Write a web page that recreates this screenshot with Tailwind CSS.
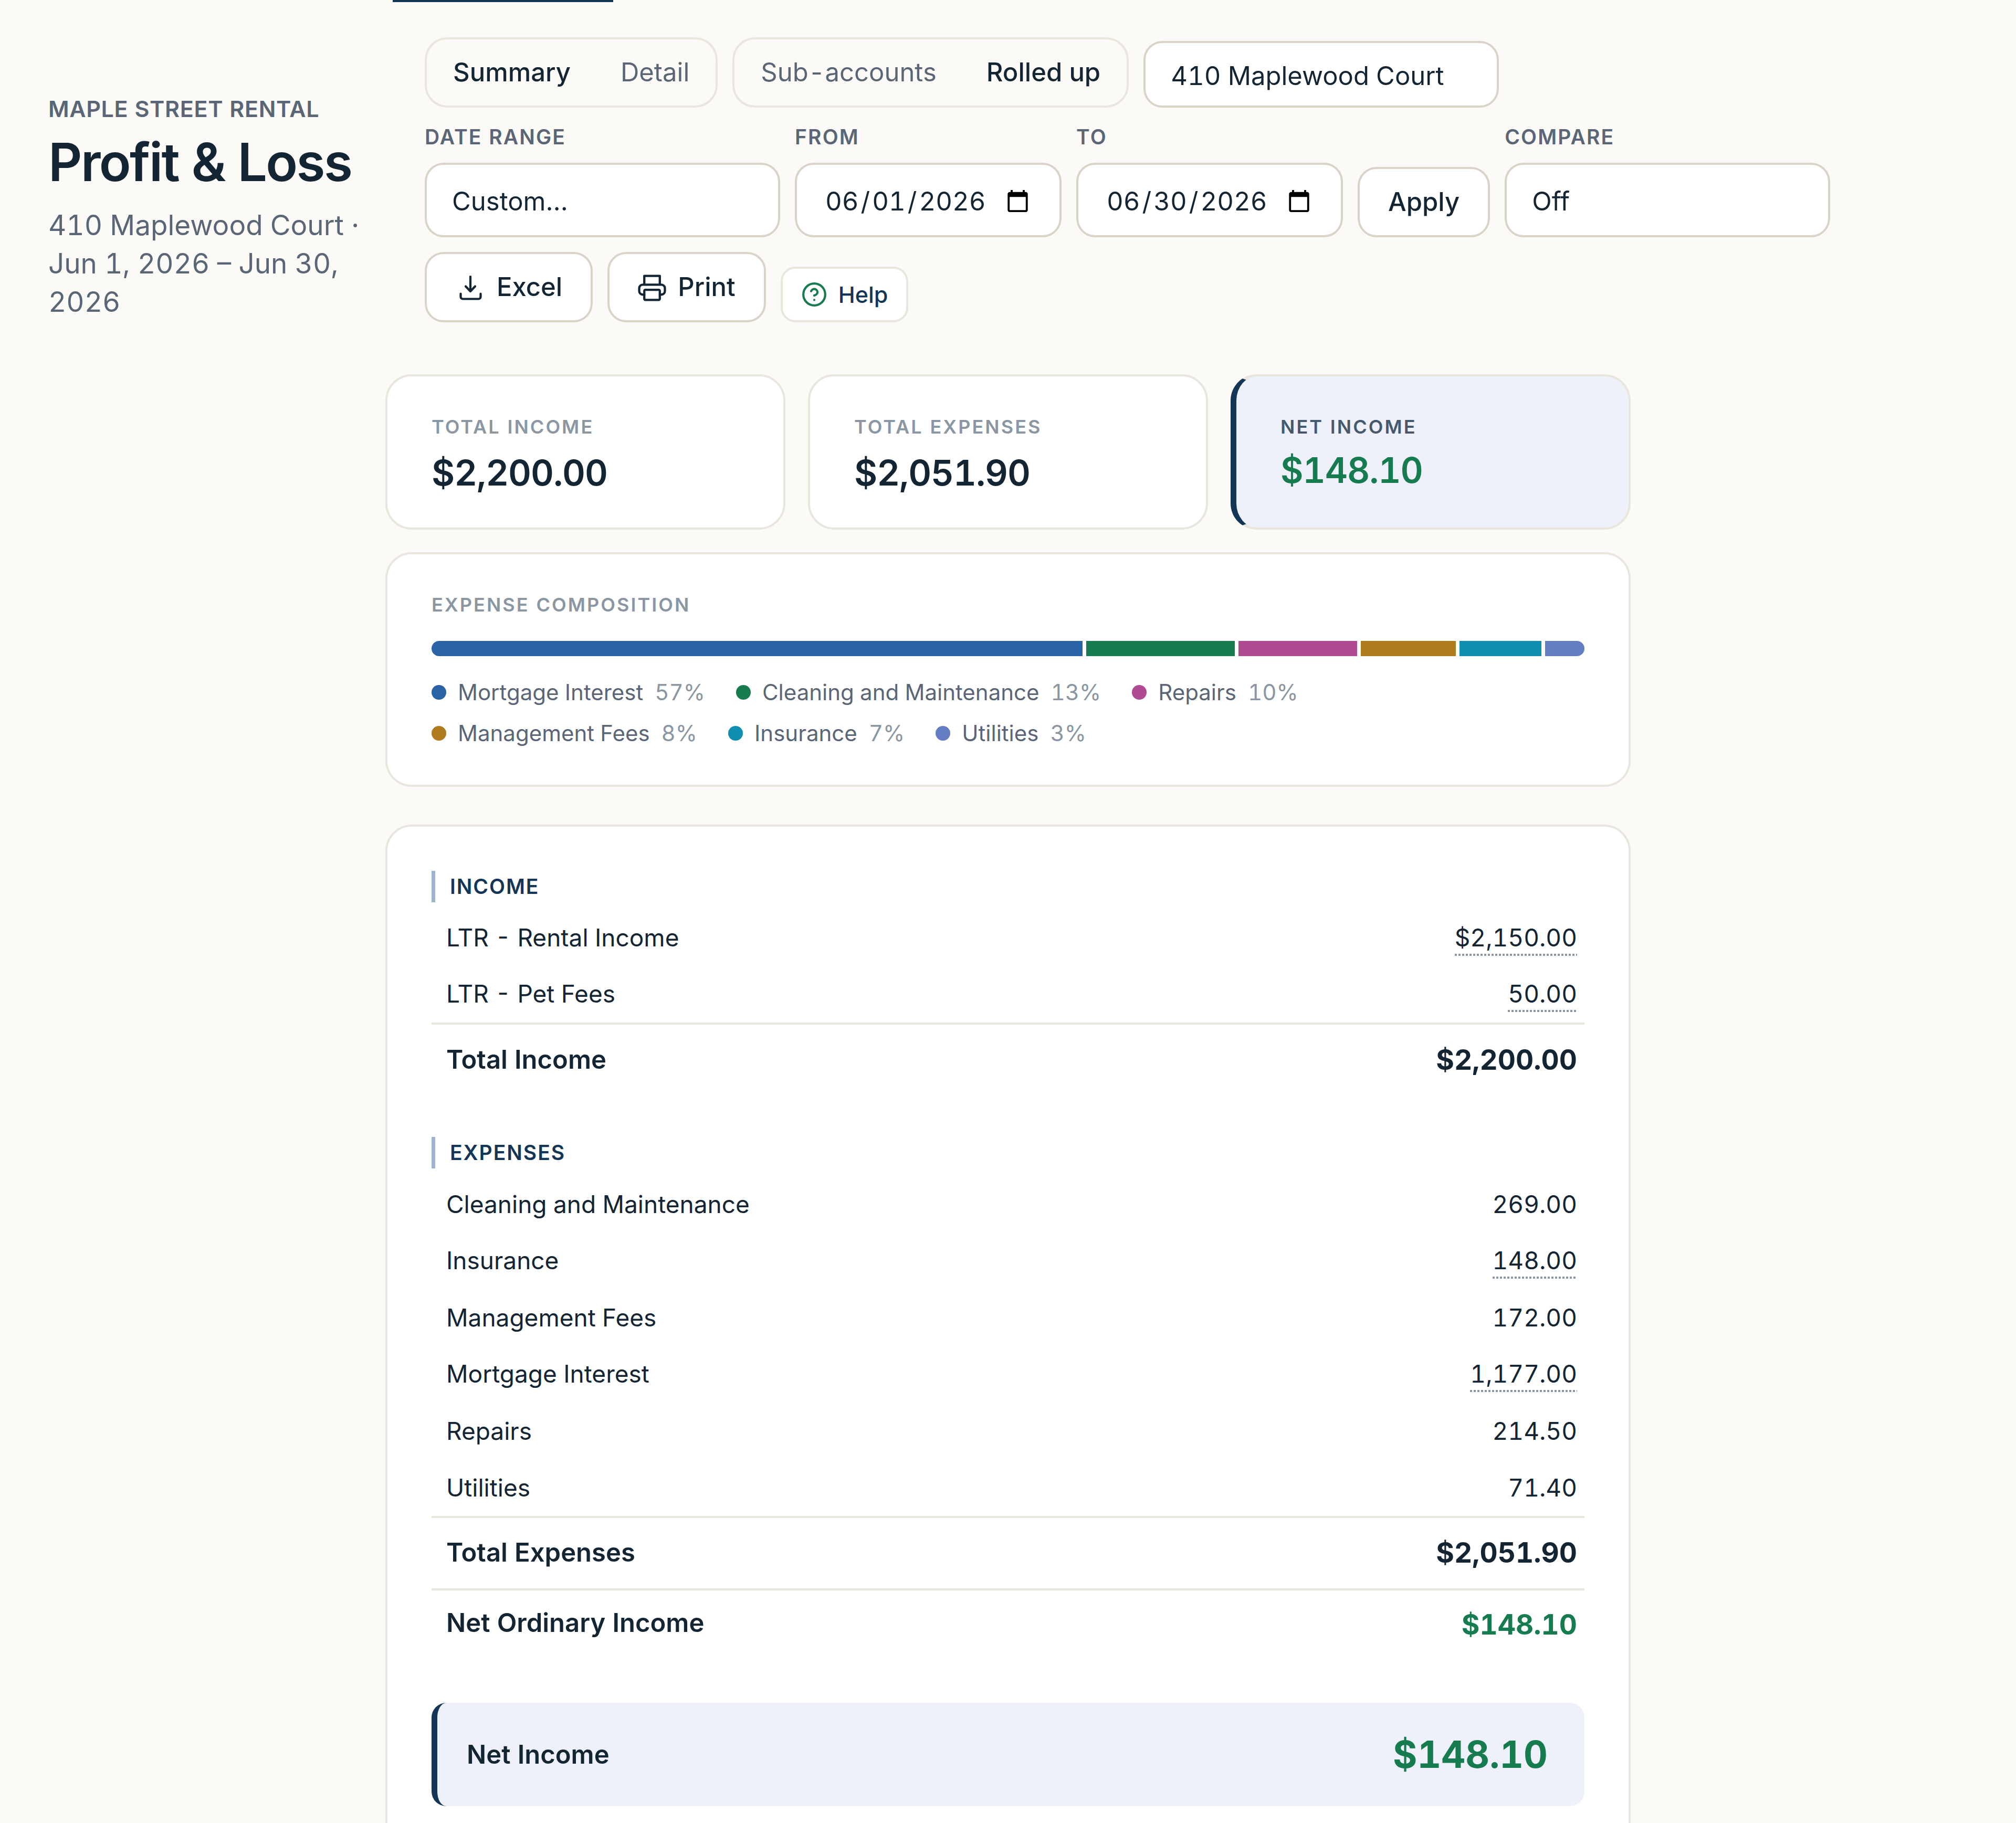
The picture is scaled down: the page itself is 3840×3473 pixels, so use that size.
<!DOCTYPE html>
<html lang="en">
<head>
<meta charset="utf-8">
<meta name="viewport" content="width=device-width, initial-scale=1">
<title>Profit &amp; Loss</title>
<script src="https://cdn.jsdelivr.net/npm/@tailwindcss/browser@4"></script>
</head>
<body class="h-screen overflow-y-auto [scrollbar-width:none] bg-[#fbfaf6] font-['Inter',sans-serif] text-[49px] text-[#132433] tabular-nums">

<nav class="flex pl-[748px]" aria-label="Reports">
  <div class="h-1 w-[420px] bg-[#133556]"></div>
</nav>

<header class="flex items-end gap-[57px] px-[92px] pt-[67px]">
  <div class="w-[660px] shrink-0 pb-0.5">
    <p class="text-[43px] leading-[60px] font-semibold tracking-[0.015em] text-[#5a6675] uppercase">Maple Street Rental</p>
    <h1 class="mt-3 text-[100px] leading-[120px] font-semibold tracking-[-0.026em]">Profit &amp; Loss</h1>
    <p class="mt-6 text-[53px] leading-[73px] text-[#5a6675]">410 Maplewood Court · Jun 1, 2026 – Jun 30, 2026</p>
  </div>

  <div class="flex flex-col gap-7">
    <div class="flex items-end gap-7">
      <div class="flex h-[134px] gap-[7px] rounded-[43px] border-4 border-[#e9e7dd] p-1.5" role="group" aria-label="Level of detail">
        <button type="button" aria-pressed="true" class="px-11 font-medium">Summary</button>
        <button type="button" aria-pressed="false" class="px-11 text-[#5a6675]">Detail</button>
      </div>
      <div class="flex h-[134px] gap-[7px] rounded-[43px] border-4 border-[#e9e7dd] p-1.5" role="group" aria-label="Account grouping">
        <button type="button" aria-pressed="false" class="px-11 text-[#5a6675]">Sub-accounts</button>
        <button type="button" aria-pressed="true" class="px-11 font-medium">Rolled up</button>
      </div>
      <select aria-label="Property" class="h-[127px] w-[677px] appearance-none rounded-[36px] border-4 border-[#dad4c8] bg-white px-12 pt-1.5 tabular-nums">
        <option>410 Maplewood Court</option>
      </select>
    </div>

    <div class="flex items-end gap-7">
      <div class="flex flex-col gap-[21px]">
        <label for="range" class="text-[39px] leading-[56px] font-semibold tracking-[0.055em] text-[#5a6675] uppercase">Date range</label>
        <select id="range" class="h-[142px] w-[677px] appearance-none rounded-[36px] border-4 border-[#dad4c8] bg-white px-12 pt-1.5">
          <option>Custom…</option>
        </select>
      </div>
      <div class="flex flex-col gap-[21px]">
        <label for="from" class="text-[39px] leading-[56px] font-semibold tracking-[0.055em] text-[#5a6675] uppercase">From</label>
        <input id="from" type="date" value="2026-06-01" class="h-[142px] w-[508px] rounded-[36px] border-4 border-[#dad4c8] bg-white px-[53px] pt-1.5 tabular-nums [&::-webkit-datetime-edit-text]:px-[3px]">
      </div>
      <div class="flex flex-col gap-[21px]">
        <label for="to" class="text-[39px] leading-[56px] font-semibold tracking-[0.055em] text-[#5a6675] uppercase">To</label>
        <input id="to" type="date" value="2026-06-30" class="h-[142px] w-[508px] rounded-[36px] border-4 border-[#dad4c8] bg-white px-[53px] pt-1.5 tabular-nums [&::-webkit-datetime-edit-text]:px-[3px]">
      </div>
      <button type="button" class="h-[134px] rounded-[36px] border-4 border-[#dad4c8] bg-white px-[54px] font-medium">Apply</button>
      <div class="flex flex-col gap-[21px]">
        <label for="compare" class="text-[39px] leading-[56px] font-semibold tracking-[0.055em] text-[#5a6675] uppercase">Compare</label>
        <select id="compare" class="h-[142px] w-[620px] appearance-none rounded-[36px] border-4 border-[#dad4c8] bg-white px-12 pt-1.5">
          <option>Off</option>
        </select>
      </div>
    </div>

    <div class="flex items-end gap-7">
      <button type="button" class="flex h-[134px] items-center gap-[22px] rounded-[36px] border-4 border-[#dad4c8] bg-white px-[54px] font-medium">
        <svg class="size-[57px]" viewBox="0 0 57 57" fill="none" stroke="currentColor" stroke-width="4.2" stroke-linecap="round" stroke-linejoin="round" aria-hidden="true"><path d="M29 8v28M20 26.500l9 9.500 9-9.500M10.500 40.500v6a4 4 0 0 0 4 4h30a4 4 0 0 0 4-4v-6"/></svg>
        Excel
      </button>
      <button type="button" class="flex h-[134px] items-center gap-[22px] rounded-[36px] border-4 border-[#dad4c8] bg-white px-[54px] font-medium">
        <svg class="size-[54px]" viewBox="0 0 53 53" fill="none" stroke="currentColor" stroke-width="4.2" stroke-linecap="round" stroke-linejoin="round" aria-hidden="true"><path d="M12 21V5.500h29V21M12 40.500H9a6.500 6.500 0 0 1-6.500-6.500v-5.500A6.500 6.500 0 0 1 9 22h35a6.500 6.500 0 0 1 6.500 6.500V34a6.500 6.500 0 0 1-6.500 6.500h-3"/><rect x="12" y="31.500" width="29" height="19" rx="2"/></svg>
        Print
      </button>
      <button type="button" class="flex h-[106px] items-center gap-[21px] rounded-[28px] border-4 border-[#e9e7dd] bg-white px-[35px] text-[43px] font-medium text-[#133556]">
        <svg class="size-[50px] text-[#177b50]" viewBox="0 0 24 24" fill="none" stroke="currentColor" stroke-width="2" stroke-linecap="round" stroke-linejoin="round" aria-hidden="true"><circle cx="12" cy="12" r="10"/><path d="M9.090 9a3 3 0 0 1 5.830 1c0 2-3 3-3 3M12 17h.01"/></svg>
        Help
      </button>
    </div>
  </div>
</header>

<main class="mx-auto mt-[99px] max-w-[2372px]">
  <section class="grid grid-cols-3 gap-[43px]" aria-label="Totals">
    <div class="h-[296px] rounded-[50px] border-4 border-[#e9e7dd] bg-white px-[84px] pt-[69px]">
      <h2 class="text-[36px] leading-[54px] font-semibold tracking-[0.085em] text-[#8b96a3] uppercase">Total income</h2>
      <p class="mt-[25px] text-[68px] leading-[70px] font-semibold tracking-[-0.016em]">$2,200.00</p>
    </div>
    <div class="h-[296px] rounded-[50px] border-4 border-[#e9e7dd] bg-white px-[84px] pt-[69px]">
      <h2 class="text-[36px] leading-[54px] font-semibold tracking-[0.085em] text-[#8b96a3] uppercase">Total expenses</h2>
      <p class="mt-[25px] text-[68px] leading-[70px] font-semibold tracking-[-0.016em]">$2,051.90</p>
    </div>
    <div class="h-[296px] rounded-[50px] border-4 border-l-[11px] border-[#e9e7dd] border-l-[#133556] bg-[#eef1f9] px-[84px] pt-[69px]">
      <h2 class="text-[36px] leading-[54px] font-semibold tracking-[0.085em] text-[#46586c] uppercase">Net income</h2>
      <p class="mt-[21px] text-[67px] leading-[70px] font-semibold tracking-[-0.016em] text-[#177b50]">$148.10</p>
    </div>
  </section>

  <section class="mt-[43px] rounded-[50px] border-4 border-[#e9e7dd] bg-white px-[84px] pt-[69px] pb-[66px]">
    <h2 class="text-[36px] leading-[54px] font-semibold tracking-[0.085em] text-[#8b96a3] uppercase">Expense composition</h2>
    <div class="mt-[42px] flex h-[29px] gap-[7px] overflow-hidden rounded-full">
      <div class="basis-0 bg-[#2a62a6]" style="flex-grow:1177"></div>
      <div class="basis-0 bg-[#177b50]" style="flex-grow:269"></div>
      <div class="basis-0 bg-[#b04a93]" style="flex-grow:214.5"></div>
      <div class="basis-0 bg-[#b07a1e]" style="flex-grow:172"></div>
      <div class="basis-0 bg-[#0f8eb2]" style="flex-grow:148"></div>
      <div class="basis-0 bg-[#647dc2]" style="flex-grow:71.4"></div>
    </div>
    <ul class="mt-[37px] flex flex-wrap gap-x-[59px] gap-y-3.5 text-[42px] leading-[64px] text-[#5a6675]">
      <li class="flex items-center gap-[22px]"><span class="size-7 rounded-full bg-[#2a62a6]"></span>Mortgage Interest <span class="text-[#8b96a3]">57%</span></li>
      <li class="flex items-center gap-[22px]"><span class="size-7 rounded-full bg-[#177b50]"></span>Cleaning and Maintenance <span class="text-[#8b96a3]">13%</span></li>
      <li class="flex items-center gap-[22px]"><span class="size-7 rounded-full bg-[#b04a93]"></span>Repairs <span class="text-[#8b96a3]">10%</span></li>
      <li class="flex items-center gap-[22px]"><span class="size-7 rounded-full bg-[#b07a1e]"></span>Management Fees <span class="text-[#8b96a3]">8%</span></li>
      <li class="flex items-center gap-[22px]"><span class="size-7 rounded-full bg-[#0f8eb2]"></span>Insurance <span class="text-[#8b96a3]">7%</span></li>
      <li class="flex items-center gap-[22px]"><span class="size-7 rounded-full bg-[#647dc2]"></span>Utilities <span class="text-[#8b96a3]">3%</span></li>
    </ul>
  </section>

  <section class="mt-[72px] rounded-[50px] border-4 border-[#e9e7dd] bg-white p-[84px]">
    <h2 id="income" class="border-l-[7px] border-[#9cb5cd] pl-7 text-[39px] leading-[60px] font-semibold tracking-[0.05em] text-[#133556] uppercase">Income</h2>
    <table class="mt-[13px] w-full border-separate border-spacing-0 text-[46px] leading-[56px]" aria-labelledby="income">
      <tbody>
        <tr>
          <th scope="row" class="h-[108px] pl-7 text-left font-normal">LTR - Rental Income</th>
          <td class="h-[108px] pr-3.5 text-right"><a href="#" class="inline-block bg-[linear-gradient(90deg,#8b96a3_4px,transparent_4px)] bg-[length:7px_4px] bg-bottom-left bg-repeat-x py-[7px]">$2,150.00</a></td>
        </tr>
        <tr>
          <th scope="row" class="h-[108px] pb-0.5 pl-7 text-left font-normal">LTR - Pet Fees</th>
          <td class="h-[108px] pr-3.5 pb-0.5 text-right"><a href="#" class="inline-block bg-[linear-gradient(90deg,#8b96a3_4px,transparent_4px)] bg-[length:7px_4px] bg-bottom-left bg-repeat-x py-[7px]">50.00</a></td>
        </tr>
        <tr>
          <th scope="row" class="h-[138px] border-t-4 border-[#e9e7dd] pl-7 text-left text-[49px] font-semibold">Total Income</th>
          <td class="h-[138px] border-t-4 border-[#e9e7dd] pr-3.5 text-right text-[53px] font-bold">$2,200.00</td>
        </tr>
      </tbody>
    </table>

    <h2 id="expenses" class="mt-20 border-l-[7px] border-[#9cb5cd] pl-7 text-[39px] leading-[60px] font-semibold tracking-[0.05em] text-[#133556] uppercase">Expenses</h2>
    <table class="mt-[14px] w-full border-separate border-spacing-0 text-[46px] leading-[56px]" aria-labelledby="expenses">
      <tbody>
        <tr>
          <th scope="row" class="h-[108px] pl-7 text-left font-normal">Cleaning and Maintenance</th>
          <td class="h-[108px] pr-3.5 text-right">269.00</td>
        </tr>
        <tr>
          <th scope="row" class="h-[108px] pb-0.5 pl-7 text-left font-normal">Insurance</th>
          <td class="h-[108px] pr-3.5 pb-0.5 text-right"><a href="#" class="inline-block bg-[linear-gradient(90deg,#8b96a3_4px,transparent_4px)] bg-[length:7px_4px] bg-bottom-left bg-repeat-x py-[7px]">148.00</a></td>
        </tr>
        <tr>
          <th scope="row" class="h-[108px] pl-7 text-left font-normal">Management Fees</th>
          <td class="h-[108px] pr-3.5 text-right">172.00</td>
        </tr>
        <tr>
          <th scope="row" class="h-[108px] pb-0.5 pl-7 text-left font-normal">Mortgage Interest</th>
          <td class="h-[108px] pr-3.5 pb-0.5 text-right"><a href="#" class="inline-block bg-[linear-gradient(90deg,#8b96a3_4px,transparent_4px)] bg-[length:7px_4px] bg-bottom-left bg-repeat-x py-[7px]">1,177.00</a></td>
        </tr>
        <tr>
          <th scope="row" class="h-[108px] pl-7 text-left font-normal">Repairs</th>
          <td class="h-[108px] pr-3.5 text-right">214.50</td>
        </tr>
        <tr>
          <th scope="row" class="h-[108px] pl-7 text-left font-normal">Utilities</th>
          <td class="h-[108px] pr-3.5 text-right">71.40</td>
        </tr>
        <tr>
          <th scope="row" class="h-[138px] border-t-4 border-[#e9e7dd] pb-0.5 pl-7 text-left text-[49px] font-semibold">Total Expenses</th>
          <td class="h-[138px] border-t-4 border-[#e9e7dd] pr-3.5 pb-0.5 text-right text-[53px] font-bold">$2,051.90</td>
        </tr>
        <tr>
          <th scope="row" class="h-[138px] border-t-4 border-[#e9e7dd] pb-2.5 pl-7 text-left text-[49px] font-semibold">Net Ordinary Income</th>
          <td class="h-[138px] border-t-4 border-[#e9e7dd] pr-3.5 pb-1 text-right text-[53px] font-bold text-[#177b50]">$148.10</td>
        </tr>
      </tbody>
    </table>

    <div class="mt-20 flex h-[197px] items-center justify-between rounded-[28px] border-l-[11px] border-[#133556] bg-[#eef1f9] pr-[70px] pl-14 font-semibold">
      <span>Net Income</span>
      <span class="text-[71px] font-bold text-[#177b50]">$148.10</span>
    </div>
  </section>
</main>

</body>
</html>
